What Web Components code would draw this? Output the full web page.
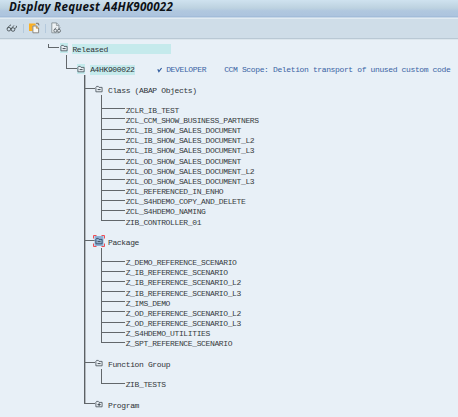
<!DOCTYPE html>
<html lang="en">
<head>
<meta charset="utf-8">
<title>Display Request A4HK900022</title>
<style>
html, body { margin: 0; height: 100%; background: #e8f0f7; overflow: hidden; }
</style>
</head>
<body>
<sap-window>
  <title-bar slot="head">Display Request A4HK900022</title-bar>
  <tool-bar slot="head"></tool-bar>
  <tree-node kind="root" last label="Released">
    <tree-node kind="request" last label="A4HK900022">
      <request-info slot="info" owner="DEVELOPER">CCM Scope: Deletion transport of unused custom code</request-info>
      <tree-node kind="group" label="Class (ABAP Objects)" items="ZCLR_IB_TEST ZCL_CCM_SHOW_BUSINESS_PARTNERS ZCL_IB_SHOW_SALES_DOCUMENT ZCL_IB_SHOW_SALES_DOCUMENT_L2 ZCL_IB_SHOW_SALES_DOCUMENT_L3 ZCL_OD_SHOW_SALES_DOCUMENT ZCL_OD_SHOW_SALES_DOCUMENT_L2 ZCL_OD_SHOW_SALES_DOCUMENT_L3 ZCL_REFERENCED_IN_ENHO ZCL_S4HDEMO_COPY_AND_DELETE ZCL_S4HDEMO_NAMING ZIB_CONTROLLER_01"></tree-node>
      <tree-node kind="group" selected label="Package" items="Z_DEMO_REFERENCE_SCENARIO Z_IB_REFERENCE_SCENARIO Z_IB_REFERENCE_SCENARIO_L2 Z_IB_REFERENCE_SCENARIO_L3 Z_IMS_DEMO Z_OD_REFERENCE_SCENARIO_L2 Z_OD_REFERENCE_SCENARIO_L3 Z_S4HDEMO_UTILITIES Z_SPT_REFERENCE_SCENARIO"></tree-node>
      <tree-node kind="group" label="Function Group" items="ZIB_TESTS"></tree-node>
      <tree-node kind="group" closed last label="Program"></tree-node>
    </tree-node>
  </tree-node>
</sap-window>
<script>
const define = (name, html, setup) => customElements.define(name, class extends HTMLElement {
  connectedCallback() {
    if (this.shadowRoot) return;
    const t = document.createElement('template');
    t.innerHTML = html;
    this.attachShadow({ mode: 'open' }).append(t.content.cloneNode(true));
    if (setup) setup(this, this.shadowRoot);
  }
});

define('sap-window', `<style>
:host { display: flex; flex-direction: column; height: 417px; background: #e8f0f7; overflow: hidden; }
main { padding: 4.4px 0 0 48px; }
</style><slot name="head"></slot><main><slot></slot></main>`);

define('title-bar', `<style>
:host { display: block; box-sizing: border-box; height: 18px; padding-left: 9px;
  background: linear-gradient(#cfe2ef 0, #bdd2e0 8px, #b0c7df 11px, #adc4de 16px, #a3bcd9 16px);
  border-bottom: 1px solid #c6d7e8;
  font: italic bold 11.6px/14px "Noto Sans", "Open Sans", sans-serif; letter-spacing: .25px; color: #0d1116; white-space: nowrap; }
</style><slot></slot>`);

define('tool-bar', `<style>
:host { display: flex; align-items: center; box-sizing: border-box; height: 22px; padding: 0 0 2px 6px;
  background: #cfdde8; border-top: 1px solid #e2ebf2; border-bottom: 1px solid #dce6ed; box-shadow: inset 0 -1px #b9c8d4; }
i { width: 1px; height: 9px; background: #b4c9dc; }
svg { display: block; }
</style>
<svg width="12" height="12" viewBox="0 0 12 12" fill="none" stroke="#4b5358" stroke-width=".9"><circle cx="2.9" cy="7.2" r="1.8"/><circle cx="7" cy="7.5" r="1.8"/><path d="M1.2 6.3 4 3.2 5 3M5.4 6.5 8 3.4M8.6 6.9 11 4.7 9.9 4M4.5 7h1"/></svg>
<i style="margin:0 5px"></i>
<svg width="12" height="12" viewBox="0 0 12 12"><path d="M0 1.4h6.6v2.2H3.6v5.4H0z" fill="#fbb024"/><path d="M7 1.3h2.4v1.6h1" fill="none" stroke="#77736d"/><path d="M3.9 4h3.6l2.1 2v4.8H3.9z" fill="#faf9f4" stroke="#77746f" stroke-width=".8"/><path d="M7.3 4v2.2h2.2" fill="#e8b76c" stroke="#a8752d" stroke-width=".6"/></svg>
<i style="margin:0 4px 0 4px"></i>
<svg width="13" height="12" viewBox="0 0 13 12"><path d="M1.8 .9h4.8l2.3 2.4v7.5H1.8z" fill="#eef2f4" stroke="#7c868c" stroke-width=".8"/><path d="M6.4 1v2.5h2.4" fill="none" stroke="#7c868c" stroke-width=".7"/><g fill="#e5ebef" stroke="#626b70" stroke-width=".9"><circle cx="5.3" cy="8.7" r="1.5"/><circle cx="9" cy="8.8" r="1.5"/><path d="M4.1 8 6 5.6M8.1 7.6l2-2" fill="none"/></g></svg>`);

define('request-info', `<style>
:host { display: flex; align-items: center; color: #3a63a4; margin-left: 22px; padding-top: 1px; }
svg { width: 6px; height: 6px; margin-right: 3px; }
b { font-weight: inherit; width: 58px; }
</style><svg viewBox="0 0 6 6"><path d="M.8 2.2 1.9 4.6 4.6 1" fill="none" stroke="#315c9e" stroke-width="1.2"/></svg><b></b><slot></slot>`,
(el, root) => { root.querySelector('b').textContent = el.getAttribute('owner'); });

define('folder-icon', `<style>
:host { display: block; flex: none; width: 8px; height: 8px; margin-top: -2px; }
svg { display: block; overflow: visible; }
</style><svg width="8" height="8" viewBox="0 0 8 8"><rect class="hl" x="0" y="-1" width="8" height="10" fill="none"/><path class="f" d="M.9 6.8V2.3L1.6 1.4h1.7l.7 1h3.1v4.4z" fill="#eaf0f5" stroke="#555e66" stroke-width=".9"/><path class="m" d="M2.6 4.6h3" stroke="#444d55"/><g class="sel"></g></svg>`,
(el, root) => {
  if (el.hasAttribute('closed')) root.querySelector('.m').setAttribute('d', 'M2.5 4.6h3.2M4.1 3.2v2.9');
  if (el.hasAttribute('tint')) root.querySelector('.hl').setAttribute('fill', '#c3eaec');
  if (el.hasAttribute('selected')) {
    const hl = root.querySelector('.hl');
    hl.setAttribute('x', '-.5');
    hl.setAttribute('width', '9');
    hl.setAttribute('fill', '#8fb1d5');
    root.querySelector('.f').setAttribute('fill', '#94b3d2');
    root.querySelector('.f').setAttribute('stroke', '#344c68');
    root.querySelector('.sel').innerHTML = '<path d="M-1.5 1.5v-3H1.5M6.5 -1.5h3v3M9.5 6.5v3h-3M1.5 9.5h-3v-3" fill="none" stroke="#ee4d55"/>';
  }
});

define('tree-leaf', `<style>
:host { display: flex; height: 10.16px; color: #373b40;
  background: linear-gradient(#62676b, #62676b) 0 0 / 1px 100% no-repeat; }
:host([last]) { background-size: 1px 4px; }
i { width: 23.5px; height: 3px; border-bottom: 1px solid #62676b; margin-right: .8px; }
span { padding-top: .5px; }
</style><i></i><span><slot></slot></span>`);

define('tree-node', `<style>
:host { display: block; --line: #62676b; --w: 1px;
  font: 8px/10.16px "Liberation Mono", "Courier New", monospace; letter-spacing: -.366px; color: #303438; white-space: nowrap;
  background: linear-gradient(var(--line), var(--line)) 0 0 / var(--w) 100% no-repeat; }
:host([kind=request]), :host([kind=group]) { padding-top: 10.16px; }
:host([kind=group]) { background-image: linear-gradient(90deg, #5c6165 1px, #b3b9be 1px); --w: 2px; }
:host([last]) { background-size: var(--w) 14px; }
:host([kind=root]) { background-size: 1px 4px; }
.row { display: flex; align-items: center; height: 10.16px; }
.branch { flex: none; width: 11px; height: 3px; align-self: flex-start; border-bottom: 1px solid var(--line); margin-right: .6px; }
.label { margin-left: 4.8px; line-height: 10px; }
.label span { position: relative; top: .6px; }
:host([kind=root]) .label { background: #c5eaec; width: 99px; }
:host([kind=request]) .label { background: #c5eaec; width: 45px; }
.kids { margin-left: 17.8px; }
.gap { height: 10.16px; background: linear-gradient(var(--line), var(--line)) 0 0 / 1px 100% no-repeat; }
</style><div class="row"><span class="branch"></span><span class="icon"></span><div class="label"><span></span></div><slot name="info"></slot></div><div class="kids"><slot></slot></div>`,
(el, root) => {
  const icon = document.createElement('folder-icon');
  for (const a of ['closed', 'selected']) if (el.hasAttribute(a)) icon.setAttribute(a, '');
  if (el.getAttribute('kind') !== 'group') icon.setAttribute('tint', '');
  root.querySelector('.icon').replaceWith(icon);
  root.querySelector('.label span').textContent = el.getAttribute('label');
  const items = (el.getAttribute('items') || '').split(' ').filter(Boolean);
  if (!items.length) return;
  const kids = root.querySelector('.kids');
  const gap = document.createElement('div');
  gap.className = 'gap';
  kids.append(gap);
  items.forEach((name, i) => {
    const leaf = document.createElement('tree-leaf');
    leaf.textContent = name;
    if (i === items.length - 1) leaf.setAttribute('last', '');
    kids.append(leaf);
  });
});
</script>
</body>
</html>
